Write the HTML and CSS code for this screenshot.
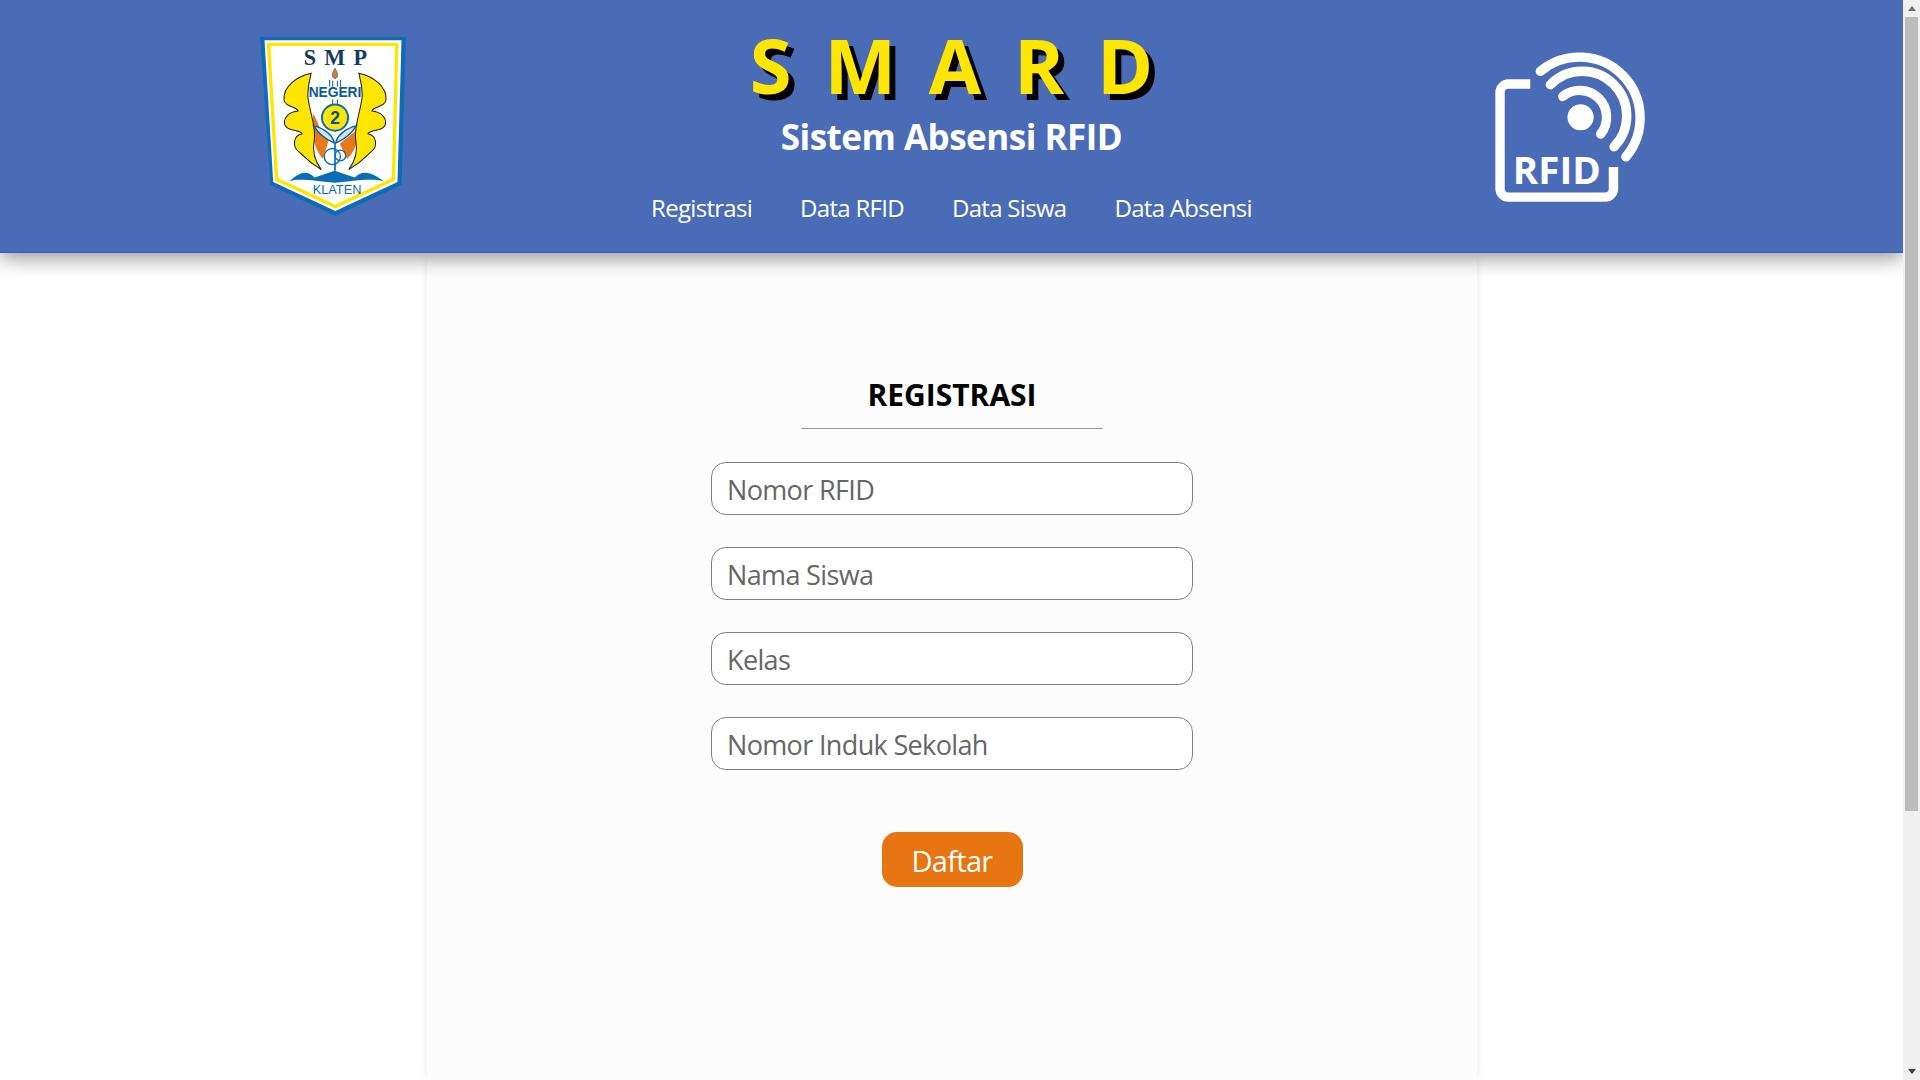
FILE: index.html
```html
<!DOCTYPE html>
<html lang="id">
<head>
    <meta charset="UTF-8">
    <meta name="viewport" content="width=device-width, initial-scale=1.0">
    <title>SMARD - Registrasi</title>
    <link rel="stylesheet" href="styles.css">
</head>
<body>
    <div class="page">
        <header class="site-header">
            <div class="logo-cell">
                <svg class="logo-school" viewBox="63 52 434 533" role="img" aria-label="Logo SMP Negeri 2 Klaten">
                    <path d="M63 52H497L484 492 287 585 94 492Z" fill="#0a6db5"/>
                    <path d="M76 62H484L472 484 287 570 102 484Z" fill="#fff"/>
                    <path d="M88 74H470L460 476 287 557 112 476Z" fill="none" stroke="#ffe600" stroke-width="10"/>
                    <text x="287" y="134" class="logo-smp" text-anchor="middle">S M P</text>
                    <path d="M222 280C215 320 218 380 250 415L270 350 240 320Z" fill="#e8791a"/>
                    <path d="M350 330C357 350 350 390 322 415L300 370Z" fill="#e8791a"/>
                    <path class="wing" d="M215 160C170 170 132 200 134 238 136 262 172 258 176 272 150 274 132 292 136 312 142 334 178 326 188 340 160 346 160 378 176 392 190 402 198 418 245 447 225 420 218 390 224 360 232 320 205 260 205 225 205 195 210 180 215 160Z"/>
                    <path class="wing" transform="translate(572 0) scale(-1 1)" d="M215 160C170 170 132 200 134 238 136 262 172 258 176 272 150 274 132 292 136 312 142 334 178 326 188 340 160 346 160 378 176 392 190 402 198 418 245 447 225 420 218 390 224 360 232 320 205 260 205 225 205 195 210 180 215 160Z"/>
                    <path d="M286 145C295 160 298 172 286 176 274 172 277 160 286 145Z" fill="#e8791a" stroke="#0a6db5" stroke-width="2"/>
                    <path d="M270 180V200M279 182V200M293 182V200M302 180V200M279 238V255M293 238V255" stroke="#0a5c9c" stroke-width="3" fill="none"/>
                    <text x="286" y="232" class="logo-negeri" text-anchor="middle">NEGERI</text>
                    <path d="M222 316C240 345 265 360 284 368 280 345 255 325 222 316Z" fill="#cfe5f5" stroke="#0a5c9c" stroke-width="4"/>
                    <path d="M350 316C332 345 307 360 288 368 292 345 317 325 350 316Z" fill="#cfe5f5" stroke="#0a5c9c" stroke-width="4"/>
                    <circle cx="286" cy="292" r="39" fill="#ffe600" stroke="#0a6db5" stroke-width="6"/>
                    <text x="286" y="310" class="logo-two" text-anchor="middle">2</text>
                    <circle cx="278" cy="408" r="24" fill="#fff" stroke="#0a6db5" stroke-width="4"/>
                    <circle cx="302" cy="405" r="16" fill="none" stroke="#0a6db5" stroke-width="4"/>
                    <path d="M286 370V450" stroke="#0a6db5" stroke-width="5"/>
                    <path d="M150 482C180 452 205 448 225 470L285 450 345 470C365 448 395 452 432 482 390 472 350 480 285 486 220 480 180 472 150 482Z" fill="#0a6db5"/>
                    <text x="292" y="520" class="logo-klaten" text-anchor="middle">KLATEN</text>
                </svg>
            </div>
            <div class="header-center">
                <h1 class="brand">S M A R D</h1>
                <p class="brand-sub">Sistem Absensi RFID</p>
                <nav class="main-nav">
                    <a href="#">Registrasi</a>
                    <a href="#">Data RFID</a>
                    <a href="#">Data Siswa</a>
                    <a href="#">Data Absensi</a>
                </nav>
            </div>
            <div class="logo-cell">
                <svg class="logo-rfid" viewBox="75 65 450 452" role="img" aria-label="RFID">
                    <path class="rfid-line" d="M180 163H115A25 25 0 0 0 90 188V475A25 25 0 0 0 115 500H403A25 25 0 0 0 428 475V410"/>
                    <path class="rfid-wave" d="M210 125A181 181 0 0 1 465 380"/>
                    <path class="rfid-wave" d="M240 165A132 132 0 0 1 430 350"/>
                    <path class="rfid-wave" d="M277 200A80 80 0 0 1 390 312"/>
                    <circle cx="330" cy="262" r="39" fill="#fff"/>
                    <text x="128" y="462" class="rfid-text" textLength="262" lengthAdjust="spacingAndGlyphs">RFID</text>
                </svg>
            </div>
        </header>

        <main class="content">
            <h2 class="page-title">REGISTRASI</h2>
            <form class="reg-form">
                <input type="text" name="rfid" placeholder="Nomor RFID">
                <input type="text" name="nama" placeholder="Nama Siswa">
                <input type="text" name="kelas" placeholder="Kelas">
                <input type="text" name="nis" placeholder="Nomor Induk Sekolah">
                <button type="submit" class="btn-daftar">Daftar</button>
            </form>
        </main>
    </div>

    <div class="scrollbar" aria-hidden="true">
        <div class="scroll-btn"><span class="arrow-up"></span></div>
        <div class="scroll-thumb"></div>
        <div class="scroll-rest"></div>
        <div class="scroll-btn"><span class="arrow-down"></span></div>
    </div>
</body>
</html>
```

FILE: styles.css
```css
body {
    display: flex;
    height: 100vh;
    margin: 0;
    padding: 0;
    overflow: hidden;
    background-color: #fff;
    font-family: "Open Sans", "Noto Sans", sans-serif;
}
.page {
    flex: 1;
    min-width: 0;
    height: 100vh;
    overflow: hidden;
}
.scrollbar {
    display: flex;
    flex-direction: column;
    align-items: center;
    width: 17px;
    background-color: #f0f0f0;
}
.scroll-btn {
    display: flex;
    justify-content: center;
    align-items: center;
    width: 17px;
    height: 17px;
}
.arrow-up {
    border-left: 4px solid transparent;
    border-right: 4px solid transparent;
    border-bottom: 5px solid #6e6e6e;
}
.arrow-down {
    border-left: 4px solid transparent;
    border-right: 4px solid transparent;
    border-top: 5px solid #404040;
}
.scroll-thumb {
    width: 13px;
    height: 794px;
    background-color: #bcbcbc;
}
.scroll-rest {
    flex: 1;
}
.site-header {
    position: relative;
    z-index: 5;
    display: grid;
    grid-template-columns: repeat(3, minmax(0, 1fr));
    align-items: center;
    height: 252px;
    padding: 0 24px;
    background-color: #4a6cb6;
    border-bottom: 1px solid #2a62c4;
    box-shadow: 0 4px 20px rgba(0,0,0,0.45);
}
.logo-cell {
    display: flex;
    justify-content: center;
}
.logo-school {
    width: 146px;
    height: 179px;
}
.wing {
    fill: #ffe600;
    stroke: #1a1a1a;
    stroke-width: 3;
}
.logo-smp {
    font-family: "Liberation Serif", serif;
    font-weight: bold;
    font-size: 66px;
    word-spacing: 8px;
    fill: #123c5c;
}
.logo-negeri {
    font-family: "Liberation Sans", sans-serif;
    font-size: 41px;
    font-weight: bold;
    fill: #0a5c9c;
}
.logo-two {
    font-family: "Liberation Sans", sans-serif;
    font-size: 52px;
    font-weight: bold;
    fill: #0a4c8c;
}
.logo-klaten {
    font-family: "Liberation Sans", sans-serif;
    font-size: 38px;
    fill: #0a6db5;
}
.logo-rfid {
    width: 151px;
    height: 152px;
    margin: 2px 0 0 2px;
}
.rfid-line, .rfid-wave {
    fill: none;
    stroke: #fff;
    stroke-width: 28;
}
.rfid-wave {
    stroke-linecap: round;
}
.rfid-text {
    font-family: "Open Sans", sans-serif;
    font-weight: bold;
    font-size: 114px;
    fill: #fff;
}
.header-center {
    display: flex;
    flex-direction: column;
    align-items: center;
    align-self: start;
    padding-top: 21px;
    text-align: center;
    white-space: nowrap;
}
.brand {
    margin: 0;
    font-size: 76px;
    line-height: 88px;
    font-weight: 700;
    word-spacing: 13px;
    color: #ffe600;
    text-shadow: 6px 6px 0 #000;
}
.brand-sub {
    margin: 6px 0 0;
    font-size: 35px;
    line-height: 44px;
    letter-spacing: -0.5px;
    font-weight: bold;
    color: #fff;
}
.main-nav {
    display: flex;
    gap: 48px;
    margin-top: 33px;
}
.main-nav a {
    color: #fff;
    text-decoration: none;
    font-size: 24px;
    line-height: 32px;
    letter-spacing: -0.7px;
}
.content {
    box-sizing: border-box;
    width: 1050px;
    height: 827px;
    margin: 0 0 0 427px;
    padding-top: 122px;
    background-color: #fcfcfc;
    box-shadow: 0 0 10px rgba(0,0,0,0.08);
}
.page-title {
    box-sizing: border-box;
    width: 302px;
    margin: 0 auto 33px;
    padding-bottom: 13px;
    border-bottom: 1px solid #999;
    text-align: center;
    font-size: 30px;
    line-height: 40px;
    color: #000;
}
.reg-form {
    display: flex;
    flex-direction: column;
    align-items: center;
}
.reg-form input {
    box-sizing: border-box;
    width: 482px;
    height: 53px;
    margin-bottom: 32px;
    padding: 2px 15px 0;
    border: 1px solid #808080;
    border-radius: 15px;
    background-color: #fff;
    font-family: inherit;
    font-size: 27px;
    letter-spacing: -0.65px;
}
.reg-form input::placeholder {
    color: #666;
}
.btn-daftar {
    width: 141px;
    height: 55px;
    margin-top: 30px;
    padding-top: 3px;
    border: none;
    border-radius: 15px;
    background-color: #e67512;
    color: #fff;
    font-family: inherit;
    font-size: 29px;
    letter-spacing: -0.7px;
    cursor: pointer;
}
```
